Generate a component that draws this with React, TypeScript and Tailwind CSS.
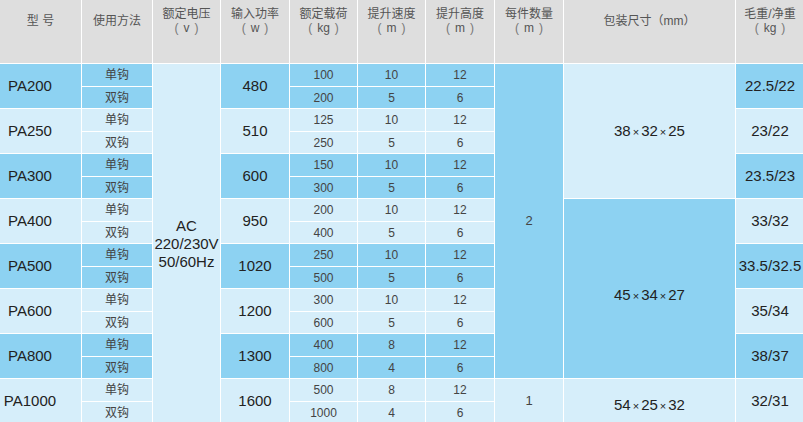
import React from "react";

const DARK = "bg-[#8dd2f2]";
const LIGHT = "bg-[#d6eefa]";

type Model = {
  name: string;
  power: string;
  loads: [string, string, string][];
  weight: string;
};

const MODELS: Model[] = [
  { name: "PA200", power: "480", loads: [["100", "10", "12"], ["200", "5", "6"]], weight: "22.5/22" },
  { name: "PA250", power: "510", loads: [["125", "10", "12"], ["250", "5", "6"]], weight: "23/22" },
  { name: "PA300", power: "600", loads: [["150", "10", "12"], ["300", "5", "6"]], weight: "23.5/23" },
  { name: "PA400", power: "950", loads: [["200", "10", "12"], ["400", "5", "6"]], weight: "33/32" },
  { name: "PA500", power: "1020", loads: [["250", "10", "12"], ["500", "5", "6"]], weight: "33.5/32.5" },
  { name: "PA600", power: "1200", loads: [["300", "10", "12"], ["600", "5", "6"]], weight: "35/34" },
  { name: "PA800", power: "1300", loads: [["400", "8", "12"], ["800", "4", "6"]], weight: "38/37" },
  { name: "PA1000", power: "1600", loads: [["500", "8", "12"], ["1000", "4", "6"]], weight: "32/31" },
];

// [title, unit] - unit shown under the title in parens
const HEADERS: [string, string?][] = [
  ["型 号"],
  ["使用方法"],
  ["额定电压", "v"],
  ["输入功率", "w"],
  ["额定载荷", "kg"],
  ["提升速度", "m"],
  ["提升高度", "m"],
  ["每件数量", "m"],
  ["包装尺寸（mm）"],
  ["毛重/净重", "kg"],
];

function Cell({ className, children }: { className: string; children?: React.ReactNode }) {
  return <div className={`flex items-center justify-center ${className}`}>{children}</div>;
}

function Dims({ a, b, c }: { a: string; b: string; c: string }) {
  return (
    <span className="text-[15px] text-[#222]">
      {a}
      <span className="text-[11px] mx-[2px]">×</span>
      {b}
      <span className="text-[11px] mx-[2px]">×</span>
      {c}
    </span>
  );
}

export default function App() {
  const cells: React.ReactNode[] = [];

  MODELS.forEach((m, i) => {
    const bg = i % 2 === 0 ? DARK : LIGHT;
    const small = "text-[12px] text-[#444]";
    const big = "text-[15px] text-[#222]";

    cells.push(
      <Cell key={`${m.name}-name`} className={`${bg} row-span-2 justify-start`}>
        <span className={`${big} w-[60px] text-center`}>{m.name}</span>
      </Cell>
    );
    cells.push(
      <Cell key={`${m.name}-h1`} className={`${bg} ${small}`}>
        单钩
      </Cell>
    );
    if (i === 0) {
      cells.push(
        <Cell key="ac" className={`${LIGHT} row-span-16 flex-col text-[15px] leading-[18px] text-[#222]`}>
          <span>AC</span>
          <span>220/230V</span>
          <span>50/60Hz</span>
        </Cell>
      );
    }
    cells.push(
      <Cell key={`${m.name}-pw`} className={`${bg} row-span-2 ${big}`}>
        {m.power}
      </Cell>
    );
    m.loads[0].forEach((v, j) => {
      cells.push(
        <Cell key={`${m.name}-a${j}`} className={`${bg} ${small}`}>
          {v}
        </Cell>
      );
    });
    if (i === 0) {
      cells.push(
        <Cell key="qty2" className={`${DARK} row-span-14 text-[13px] text-[#444]`}>
          2
        </Cell>
      );
    }
    if (i === 7) {
      cells.push(
        <Cell key="qty1" className={`${LIGHT} row-span-2 text-[13px] text-[#444]`}>
          1
        </Cell>
      );
    }
    if (i === 0) {
      cells.push(
        <Cell key="pk1" className={`${LIGHT} row-span-6`}>
          <Dims a="38" b="32" c="25" />
        </Cell>
      );
    }
    if (i === 3) {
      cells.push(
        <Cell key="pk2" className={`${DARK} row-span-8 pt-[14px]`}>
          <Dims a="45" b="34" c="27" />
        </Cell>
      );
    }
    if (i === 7) {
      cells.push(
        <Cell key="pk3" className={`${LIGHT} row-span-2 pt-[8px]`}>
          <Dims a="54" b="25" c="32" />
        </Cell>
      );
    }
    cells.push(
      <Cell key={`${m.name}-wt`} className={`${bg} row-span-2 ${big} whitespace-nowrap`}>
        {m.weight}
      </Cell>
    );

    cells.push(
      <Cell key={`${m.name}-h2`} className={`${bg} ${small}`}>
        双钩
      </Cell>
    );
    m.loads[1].forEach((v, j) => {
      cells.push(
        <Cell key={`${m.name}-b${j}`} className={`${bg} ${small}`}>
          {v}
        </Cell>
      );
    });
  });

  return (
    <div
      className="w-[803px] h-[422px] overflow-hidden bg-white"
      style={{ fontFamily: '"Liberation Sans", "Noto Sans CJK SC", Arial, sans-serif' }}
    >
      <div className="grid w-[804px] grid-cols-[81px_70px_67px_68px_67px_67px_68px_68px_171px_68px] grid-rows-[63px_repeat(8,22px_21px)] gap-px bg-white">
        {HEADERS.map(([title, unit], i) => (
          <div key={i} className="bg-[#dedede]">
            <div className="h-[42px] flex flex-col items-center justify-center text-[12px] leading-[14px] text-[#555] whitespace-nowrap">
              <span>{title}</span>
              {unit && (
                <span className="flex">
                  <span className="text-[#777]">(</span>
                  <span className="mx-[5px]">{unit}</span>
                  <span className="text-[#777]">)</span>
                </span>
              )}
            </div>
          </div>
        ))}
        {cells}
      </div>
    </div>
  );
}
